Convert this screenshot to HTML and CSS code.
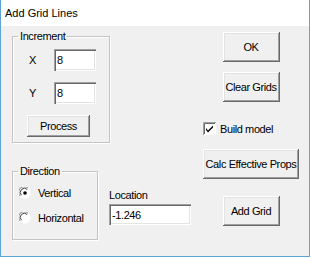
FILE: index.html
```html
<!DOCTYPE html>
<html lang="en">
<head>
  <meta charset="UTF-8" />
  <title>Add Grid Lines</title>
  <link rel="stylesheet" href="styles.css">
</head>
<body>
  <div class="window">
    <div class="titlebar">Add Grid Lines</div>
    <div class="client">
      <div class="left">
        <fieldset class="group inc">
          <legend>Increment</legend>
          <div class="field-row">
            <span class="lbl">X</span>
            <input class="edit small" value="8">
          </div>
          <div class="field-row">
            <span class="lbl">Y</span>
            <input class="edit small" value="8">
          </div>
          <button class="btn process">Process</button>
        </fieldset>

        <div class="lower">
          <fieldset class="group dir">
            <legend>Direction</legend>
            <label class="radio">
              <svg viewBox="0 0 12 12" width="12" height="12">
                <circle cx="6" cy="6" r="5.5" fill="#fff"/>
                <path d="M1.2 9 A5 5 0 0 1 9 1.2" stroke="#808080" stroke-width="1" fill="none"/>
                <path d="M2.5 8.2 A3.8 3.8 0 0 1 8.2 2.5" stroke="#404040" stroke-width="1" fill="none"/>
                <circle cx="6" cy="6" r="1.8" fill="#000"/>
              </svg>
              Vertical
            </label>
            <label class="radio">
              <svg viewBox="0 0 12 12" width="12" height="12">
                <circle cx="6" cy="6" r="5.5" fill="#fff"/>
                <path d="M1.2 9 A5 5 0 0 1 9 1.2" stroke="#808080" stroke-width="1" fill="none"/>
                <path d="M2.5 8.2 A3.8 3.8 0 0 1 8.2 2.5" stroke="#404040" stroke-width="1" fill="none"/>
              </svg>
              Horizontal
            </label>
          </fieldset>
          <div class="location">
            <span class="lbl">Location</span>
            <input class="edit wide" value="-1.246">
          </div>
        </div>
      </div>

      <div class="right">
        <button class="btn std">OK</button>
        <button class="btn std">Clear Grids</button>
        <label class="check">
          <svg viewBox="0 0 13 13" width="13" height="13">
            <rect x="0" y="0" width="13" height="13" fill="#fff"/>
            <path d="M0.5 13 V0.5 H13" stroke="#a0a0a0" fill="none"/>
            <path d="M1.5 12 V1.5 H12" stroke="#696969" fill="none"/>
            <path d="M3 6 L5 8.5 L10 3.5 L10 5.5 L5 10.5 L3 8 Z" fill="#000"/>
          </svg>
          Build model
        </label>
        <button class="btn calc">Calc Effective Props</button>
        <button class="btn std add">Add Grid</button>
      </div>
    </div>
  </div>
</body>
</html>
```

FILE: styles.css
```css
body {
  margin: 0;
  padding: 0;
  background: #fff;
  font-family: 'Liberation Sans', Arial, sans-serif;
  font-size: 11px;
  letter-spacing: -0.4px;
  color: #000;
}

.window {
  width: 310px;
  height: 257px;
  box-sizing: border-box;
  border-left: 1px solid #5ea2d6;
  border-right: 1px solid #5ea2d6;
  border-bottom: 1px solid #5ea2d6;
  background: #f0f0f0;
  display: flex;
  flex-direction: column;
}

.titlebar {
  height: 26px;
  line-height: 26px;
  background: #fff;
  padding-left: 4px;
  font-size: 11px;
  letter-spacing: 0;
}

.client {
  display: flex;
  gap: 11px;
  padding-left: 11px;
}

.left {
  width: 180px;
}

.group {
  margin: 0;
  padding: 0;
  box-sizing: border-box;
  border: 1px solid #c4c4c4;
  box-shadow: inset 1px 1px 0 #fff, 1px 1px 0 #fff;
}

.group legend {
  margin-left: 5px;
  padding: 0 2px;
  line-height: 13px;
}

.inc {
  width: 98px;
  margin-top: 4px;
  padding: 6px 0 5px 0;
}

.field-row {
  display: flex;
  align-items: center;
  margin-bottom: 11px;
}

.field-row .lbl {
  width: 25px;
  padding-left: 16px;
}

.edit {
  box-sizing: border-box;
  margin: 0;
  border: none;
  background: #fff;
  font-family: inherit;
  font-size: 11px;
  letter-spacing: -0.4px;
  padding: 0 3px;
  outline: none;
  box-shadow: inset 1px 1px 0 #a0a0a0, inset 2px 2px 0 #696969, inset -1px -1px 0 #fff, inset -2px -2px 0 #e3e3e3;
}

.edit.small {
  width: 42px;
  height: 22px;
}

.edit.wide {
  width: 82px;
  height: 21px;
}

.btn {
  box-sizing: border-box;
  margin: 0;
  padding: 0;
  border: none;
  background: #f0f0f0;
  font-family: inherit;
  font-size: 11px;
  letter-spacing: -0.4px;
  color: #000;
  white-space: nowrap;
  overflow: hidden;
  box-shadow: inset -1px -1px 0 #696969, inset 1px 1px 0 #fff, inset -2px -2px 0 #a0a0a0, inset 2px 2px 0 #e3e3e3;
}

.process {
  width: 63px;
  height: 22px;
  margin: 4px 0 0 14px;
  display: block;
}

.lower {
  display: flex;
  margin-top: 22px;
}

.dir {
  width: 86px;
  padding: 8px 0 15px 0;
}

.radio {
  display: flex;
  align-items: center;
  gap: 7px;
  height: 13px;
  padding-left: 6px;
  margin-bottom: 12px;
}

.radio:last-child {
  margin-bottom: 0;
}

.location {
  display: flex;
  flex-direction: column;
  margin-left: 11px;
  padding-top: 24px;
  gap: 3px;
}

.right {
  width: 96px;
  display: flex;
  flex-direction: column;
  align-items: center;
  padding-top: 6px;
}

.btn.std {
  width: 57px;
  height: 30px;
}

.btn.std + .btn.std {
  margin-top: 10px;
}

.check {
  align-self: flex-start;
  display: flex;
  align-items: center;
  gap: 4px;
  margin-top: 20px;
}

.calc {
  width: 96px;
  height: 30px;
  margin-top: 14px;
}

.add {
  margin-top: 17px;
}
```
